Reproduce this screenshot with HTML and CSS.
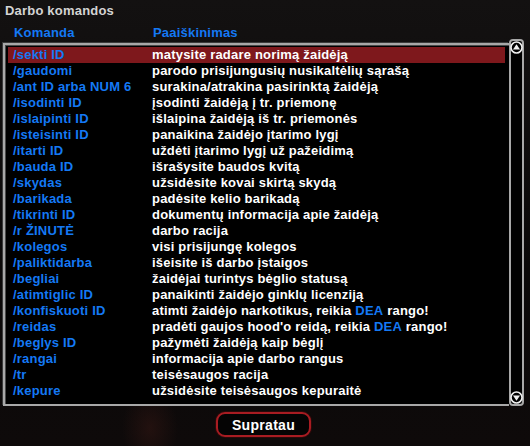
FILE: index.html
```html
<!DOCTYPE html>
<html lang="lt">
<head>
    <meta charset="UTF-8">
    <meta name="viewport" content="width=device-width, initial-scale=1.0">
    <title>Darbo komandos</title>
    <link rel="stylesheet" href="styles.css">
</head>
<body>
    <div class="dialog">
        <div class="title">Darbo komandos</div>

        <div class="cols">
            <span class="cmd">Komanda</span>
            <span>Paaiškinimas</span>
        </div>

        <div class="listbox">
            <ul class="list">
                <li class="row active"><span class="cmd">/sekti ID</span><span class="desc">matysite radare norimą žaidėją</span></li>
                <li class="row"><span class="cmd">/gaudomi</span><span class="desc">parodo prisijungusių nusikaltėlių sąrašą</span></li>
                <li class="row"><span class="cmd">/ant ID arba NUM 6</span><span class="desc">surakina/atrakina pasirinktą žaidėją</span></li>
                <li class="row"><span class="cmd">/isodinti ID</span><span class="desc">įsodinti žaidėją į tr. priemonę</span></li>
                <li class="row"><span class="cmd">/islaipinti ID</span><span class="desc">išlaipina žaidėją iš tr. priemonės</span></li>
                <li class="row"><span class="cmd">/isteisinti ID</span><span class="desc">panaikina žaidėjo įtarimo lygį</span></li>
                <li class="row"><span class="cmd">/itarti ID</span><span class="desc">uždėti įtarimo lygį už pažeidimą</span></li>
                <li class="row"><span class="cmd">/bauda ID</span><span class="desc">išrašysite baudos kvitą</span></li>
                <li class="row"><span class="cmd">/skydas</span><span class="desc">užsidėsite kovai skirtą skydą</span></li>
                <li class="row"><span class="cmd">/barikada</span><span class="desc">padėsite kelio barikadą</span></li>
                <li class="row"><span class="cmd">/tikrinti ID</span><span class="desc">dokumentų informacija apie žaidėją</span></li>
                <li class="row"><span class="cmd">/r ŽINUTĖ</span><span class="desc">darbo racija</span></li>
                <li class="row"><span class="cmd">/kolegos</span><span class="desc">visi prisijungę kolegos</span></li>
                <li class="row"><span class="cmd">/paliktidarba</span><span class="desc">išeisite iš darbo įstaigos</span></li>
                <li class="row"><span class="cmd">/begliai</span><span class="desc">žaidėjai turintys bėglio statusą</span></li>
                <li class="row"><span class="cmd">/atimtiglic ID</span><span class="desc">panaikinti žaidėjo ginklų licenziją</span></li>
                <li class="row"><span class="cmd">/konfiskuoti ID</span><span class="desc">atimti žaidėjo narkotikus, reikia <b>DEA</b> rango!</span></li>
                <li class="row"><span class="cmd">/reidas</span><span class="desc">pradėti gaujos hood'o reidą, reikia <b>DEA</b> rango!</span></li>
                <li class="row"><span class="cmd">/beglys ID</span><span class="desc">pažymėti žaidėją kaip bėglį</span></li>
                <li class="row"><span class="cmd">/rangai</span><span class="desc">informacija apie darbo rangus</span></li>
                <li class="row"><span class="cmd">/tr</span><span class="desc">teisėsaugos racija</span></li>
                <li class="row"><span class="cmd">/kepure</span><span class="desc">užsidėsite teisėsaugos kepuraitė</span></li>
            </ul>

            <div class="scrollbar">
                <svg class="arrow" width="13" height="13" viewBox="0 0 13 13">
                    <circle cx="6.5" cy="6.5" r="5.5" fill="#000" stroke="#f0f0f0" stroke-width="1.6"/>
                    <polygon points="6.5,3.2 10,8.6 3,8.6" fill="#f0f0f0"/>
                </svg>
                <svg class="arrow" width="13" height="13" viewBox="0 0 13 13">
                    <circle cx="6.5" cy="6.5" r="5.5" fill="#000" stroke="#f0f0f0" stroke-width="1.6"/>
                    <polygon points="6.5,9.8 10,4.4 3,4.4" fill="#f0f0f0"/>
                </svg>
            </div>
        </div>

        <div class="footer">
            <button class="btn">Supratau</button>
        </div>
    </div>
</body>
</html>
```

FILE: styles.css
```css
/* SA-MP style dialog */
body {
    margin: 0;
    padding: 0;
    width: 530px;
    height: 446px;
    overflow: hidden;
    font-family: "Liberation Sans", Arial, sans-serif;
    font-size: 13px;
    font-weight: bold;
    background:
        radial-gradient(ellipse 28px 40px at 150px 428px, rgba(55, 24, 20, 0.5), transparent),
        radial-gradient(ellipse 35px 28px at 150px 360px, rgba(35, 16, 14, 0.4), transparent),
        linear-gradient(180deg, #131111 0%, #0b0909 60%, #0e0a0a 100%);
    color: #fff;
}

.dialog {
    display: flex;
    flex-direction: column;
}

.title {
    padding: 3px 5px 0;
    line-height: 16px;
    color: #d4d4d4;
    letter-spacing: 0.2px;
}

.cols {
    display: flex;
    margin-top: 6px;
    padding-left: 14px;
    line-height: 16px;
    color: #1479f5;
    letter-spacing: 0.2px;
}

.cmd {
    width: 139px;
    flex-shrink: 0;
    color: #1479f5;
}

.listbox {
    display: flex;
    margin: 2px 6px 0 3px;
}

.list {
    flex: 1;
    list-style: none;
    margin: 0;
    padding: 2px 4px 5px 3px;
    background: #000;
    border: 2px solid #a8a8a8;
    border-right: none;
    box-shadow: inset 1px 1px 0 #4a4a4a, -1px -1px 0 #3a3a3a;
}

.row {
    display: flex;
    height: 16px;
    line-height: 16px;
    padding-left: 5px;
    white-space: nowrap;
    letter-spacing: 0.2px;
}

.row.active {
    background: #7e181c;
}

.desc {
    color: #fff;
}

.desc b {
    color: #1479f5;
}

.scrollbar {
    width: 11px;
    display: flex;
    flex-direction: column;
    justify-content: space-between;
    align-items: center;
    background: #000;
    border: 2px solid #a8a8a8;
    border-radius: 4px;
    margin-top: -4px;
}

.arrow {
    display: block;
    margin: 0 -3px;
}

.footer {
    display: flex;
    justify-content: center;
    padding: 6px 3px 0 0;
}

.btn {
    width: 95px;
    height: 25px;
    background: #050404;
    border: 2px solid #a81c22;
    border-radius: 9px;
    color: #fff;
    font-family: "Liberation Sans", Arial, sans-serif;
    font-size: 14px;
    font-weight: bold;
    letter-spacing: 0.3px;
    padding: 0;
    box-shadow: 0 0 0 1px #2a0a0a;
}
```
